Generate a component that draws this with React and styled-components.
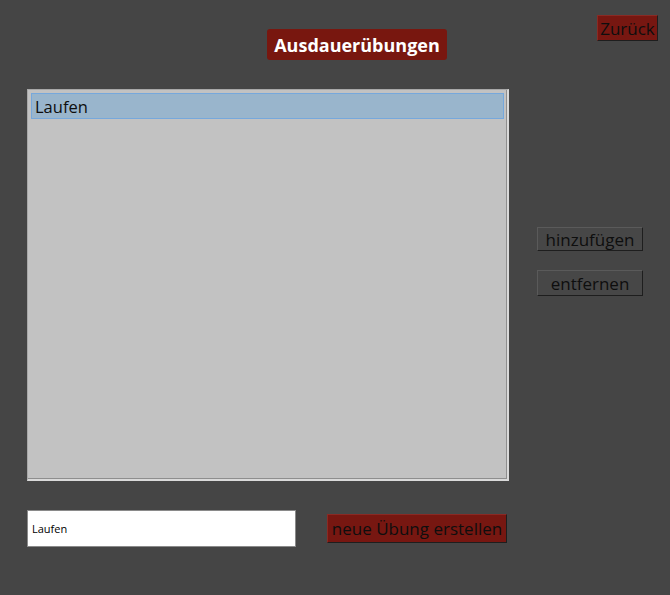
import styled, { createGlobalStyle } from "styled-components";

const GlobalStyle = createGlobalStyle`
  html, body {
    margin: 0;
    padding: 0;
    background: #454545;
  }
  * {
    box-sizing: border-box;
  }
`;

const font = `"Open Sans", "Noto Sans", sans-serif`;

const Page = styled.div`
  width: 670px;
  height: 595px;
  background: #454545;
  font-family: ${font};
  display: flex;
  flex-direction: column;
  overflow: hidden;
`;

const Header = styled.div`
  display: flex;
  justify-content: space-between;
  align-items: flex-start;
  padding: 15px 12px 0 267px;
  height: 89px;
`;

const Title = styled.h1`
  margin: 14px 0 0;
  height: 31px;
  width: 180px;
  background: #78170f;
  border-radius: 3px;
  color: #fff;
  font-size: 18px;
  font-weight: 700;
  display: flex;
  align-items: center;
  justify-content: center;
`;

const Button = styled.button`
  font-family: ${font};
  font-size: ${(p) => p.size || 17}px;
  color: #0e0e0e;
  background: ${(p) => (p.red ? "#771711" : "#474747")};
  border: 1px solid;
  border-color: ${(p) => (p.red ? "#8a2a24" : "#5a5a5a")} #1e1e1e #1e1e1e
    ${(p) => (p.red ? "#8a2a24" : "#5a5a5a")};
  width: ${(p) => p.w}px;
  height: ${(p) => p.h}px;
  padding: 0;
  display: flex;
  align-items: center;
  justify-content: center;
  cursor: pointer;
`;

const Main = styled.div`
  display: flex;
  padding-left: 27px;
`;

const ListBox = styled.div`
  width: 482px;
  height: 392px;
  background: #c2c2c2;
  border: 1px solid #a8a8a8;
  border-right: 2px solid #d9d9d9;
  border-bottom: 2px solid #d9d9d9;
  box-shadow: inset -1px -1px 0 #8e8e8e;
  padding: 3px;
`;

const ListItem = styled.div`
  height: 26px;
  background: ${(p) => (p.selected ? "#99b5cc" : "transparent")};
  border: 1px solid ${(p) => (p.selected ? "#76a8dc" : "transparent")};
  color: #0e0e0e;
  font-size: 16.5px;
  display: flex;
  align-items: center;
  padding-left: 3px;
`;

const Side = styled.div`
  display: flex;
  flex-direction: column;
  gap: 19px;
  padding-top: 138px;
  margin-left: 28px;
`;

const Bottom = styled.div`
  display: flex;
  align-items: center;
  padding: 29px 0 0 27px;
  gap: 31px;
`;

const Input = styled.input`
  width: 269px;
  height: 37px;
  background: #fff;
  border: 1px solid #8a8a8a;
  font-family: ${font};
  font-size: 11px;
  color: #000;
  padding: 0 4px;
  outline: none;
`;

export default function App() {
  return (
    <Page>
      <GlobalStyle />
      <Header>
        <Title>Ausdauerübungen</Title>
        <Button red w={61} h={26}>
          Zurück
        </Button>
      </Header>
      <Main>
        <ListBox>
          <ListItem selected>Laufen</ListItem>
        </ListBox>
        <Side>
          <Button w={106} h={24}>
            hinzufügen
          </Button>
          <Button w={106} h={26}>
            entfernen
          </Button>
        </Side>
      </Main>
      <Bottom>
        <Input defaultValue="Laufen" />
        <Button red w={180} h={29}>
          neue Übung erstellen
        </Button>
      </Bottom>
    </Page>
  );
}
